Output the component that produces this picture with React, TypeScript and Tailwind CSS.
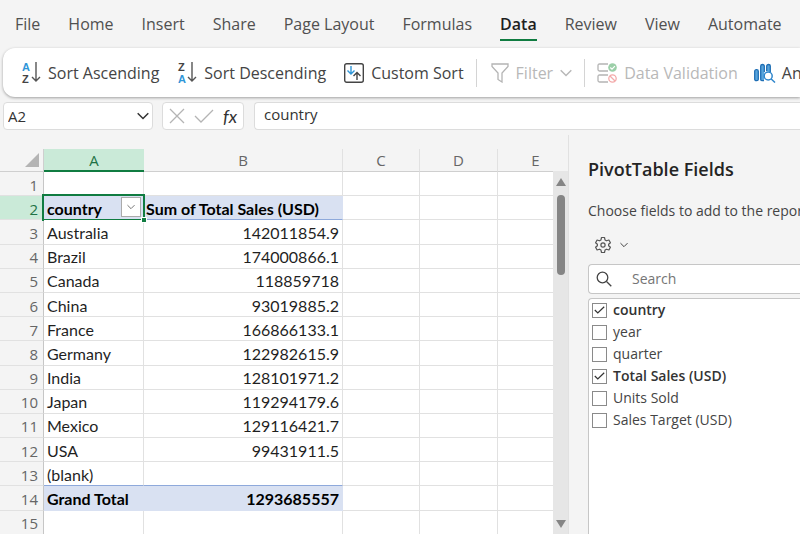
import { useState } from "react";

const tabs = ["File", "Home", "Insert", "Share", "Page Layout", "Formulas", "Data", "Review", "View", "Automate"];

const rows = [
  { a: "", b: "" },
  { a: "country", b: "Sum of Total Sales (USD)" },
  { a: "Australia", b: "142011854.9" },
  { a: "Brazil", b: "174000866.1" },
  { a: "Canada", b: "118859718" },
  { a: "China", b: "93019885.2" },
  { a: "France", b: "166866133.1" },
  { a: "Germany", b: "122982615.9" },
  { a: "India", b: "128101971.2" },
  { a: "Japan", b: "119294179.6" },
  { a: "Mexico", b: "129116421.7" },
  { a: "USA", b: "99431911.5" },
  { a: "(blank)", b: "" },
  { a: "Grand Total", b: "1293685557" },
  { a: "", b: "" },
];

const fieldNames = ["country", "year", "quarter", "Total Sales (USD)", "Units Sold", "Sales Target (USD)"];

function Chevron({ className }: { className: string }) {
  return (
    <svg viewBox="0 0 12 8" className={className} fill="none" stroke="currentColor" strokeWidth="1.5">
      <path d="M0.7 1.2 6 6.5l5.3-5.3" />
    </svg>
  );
}

function SortIcon({ top, bottom }: { top: string; bottom: string }) {
  return (
    <svg viewBox="0 0 20 24" className="h-6 w-5 shrink-0" fontFamily="Liberation Sans" fontSize="11" fontWeight="700">
      <text x="1" y="10" fill={top === "A" ? "#2f96d8" : "#444444"}>{top}</text>
      <text x="1" y="22" fill={bottom === "A" ? "#2f96d8" : "#444444"}>{bottom}</text>
      <path d="M15 1v19M11 16l4 4 4-4" fill="none" stroke="#555555" strokeWidth="1.4" />
    </svg>
  );
}

function CustomSortIcon() {
  return (
    <svg viewBox="0 0 20 20" className="size-5 shrink-0" fill="none" strokeWidth="1.4">
      <rect x="0.7" y="0.7" width="18.6" height="18.6" rx="2" stroke="#444444" />
      <path d="M7 3v8M3.5 7.5 7 11l3.500-3.500" stroke="#2f96d8" />
      <path d="M13 17V9.5M9.5 13 13 9.5l3.5 3.5" stroke="#444444" />
    </svg>
  );
}

function FilterIcon() {
  return (
    <svg viewBox="0 0 18 20" className="h-5 w-[18px] shrink-0" fill="none" stroke="#b4b4b4" strokeWidth="1.3">
      <path d="M1 1h16v2.5l-6 6.500v9L7 16.500V10L1 3.500z" />
    </svg>
  );
}

function ValidationIcon() {
  return (
    <svg viewBox="0 0 20 20" className="size-5 shrink-0" fill="none">
      <path d="M11 1H2.500Q1 1 1 2.500v4Q1 8 2.500 8H11M11 12H2.500Q1 12 1 13.500v4Q1 19 2.500 19H11" stroke="#b4b4b4" strokeWidth="1.3" />
      <circle cx="15.500" cy="4.500" r="4.300" fill="#9bcfa8" />
      <path d="m13.300 4.500 1.700 1.700 2.900-3" stroke="#ffffff" strokeWidth="1.2" />
      <circle cx="15.500" cy="15.500" r="3.700" stroke="#f3aaaa" strokeWidth="1.3" />
      <path d="m13 13 5 5" stroke="#f3aaaa" strokeWidth="1.2" />
    </svg>
  );
}

function AnalyzeIcon() {
  return (
    <svg viewBox="0 0 22 20" className="h-5 w-[22px] shrink-0" fill="none">
      <rect x="0.700" y="6.700" width="3.600" height="11" rx="1.500" fill="#5aa5dc" stroke="#1f6fb5" strokeWidth="1.300" />
      <path d="M10.300 9V3Q10.300 1.500 8.500 1.500T6.700 3v13.500Q6.700 17.700 8.500 17.700H10" fill="#5aa5dc" stroke="#1f6fb5" strokeWidth="1.300" />
      <path d="M12.700 8V3Q12.700 1.500 14.500 1.500T16.300 3v6" fill="#5aa5dc" stroke="#1f6fb5" strokeWidth="1.300" />
      <circle cx="14.200" cy="13" r="4" fill="#ffffff" stroke="#2f86cc" strokeWidth="1.500" />
      <path d="m17.200 16 3.800 3.500" stroke="#2f86cc" strokeWidth="1.500" />
    </svg>
  );
}

function GearIcon() {
  return (
    <svg viewBox="0 0 24 24" className="size-[18px]" fill="none" stroke="#555555" strokeWidth="1.600" strokeLinejoin="round">
      <path d="M10 2h4l.7 3.200 2 1.200 3.200-1 2 3.500L19.500 11v2l2.400 2.100-2 3.500-3.200-1-2 1.200L14 22h-4l-.7-3.200-2-1.200-3.200 1-2-3.500L4.500 13v-2L2.100 8.900l2-3.500 3.200 1 2-1.200z" />
      <circle cx="12" cy="12" r="2.800" />
    </svg>
  );
}

function Ribbon() {
  return (
    <div className="ml-[3px] flex h-[49px] items-center overflow-hidden whitespace-nowrap rounded-l-xl bg-white pl-[18px] text-base text-[#444444] shadow-[0_1px_3px_rgba(0,0,0,0.35)]">
      <button className="flex shrink-0 items-center gap-[7px]"><SortIcon top="A" bottom="Z" />Sort Ascending</button>
      <button className="ml-[18px] flex shrink-0 items-center gap-[7px]"><SortIcon top="Z" bottom="A" />Sort Descending</button>
      <button className="ml-[18px] flex shrink-0 items-center gap-[7px]"><CustomSortIcon />Custom Sort</button>
      <div className="mx-3 h-7 w-px shrink-0 bg-[#d4d4d4]" />
      <button disabled className="ml-[2px] flex shrink-0 items-center gap-[7px] text-[#b8b8b8]">
        <FilterIcon />Filter<Chevron className="h-2 w-3" />
      </button>
      <div className="mx-3 h-7 w-px shrink-0 bg-[#d4d4d4]" />
      <button disabled className="flex shrink-0 items-center gap-[7px] text-[#b8b8b8]"><ValidationIcon />Data Validation</button>
      <button className="ml-4 flex shrink-0 items-center gap-[6px]"><AnalyzeIcon />Analyze Data</button>
    </div>
  );
}

function FormulaBar() {
  return (
    <div className="mt-[5px] flex h-7 pl-[3px] text-[15px] text-[#333333]">
      <div className="flex w-[150px] shrink-0 items-center rounded border border-[#dcdcdc] bg-white pl-1 pr-[3px]">
        <input aria-label="Name box" defaultValue="A2" className="min-w-0 flex-1 outline-none" />
        <button aria-label="Open name box list"><Chevron className="h-2 w-3" /></button>
      </div>
      <div className="ml-[9px] flex w-[82px] shrink-0 items-center justify-between rounded border border-[#dcdcdc] bg-white px-[6px]">
        <button aria-label="Cancel">
          <svg viewBox="0 0 16 16" className="size-4" stroke="#b4b4b4" strokeWidth="1.300"><path d="m1 1 14 14M15 1 1 15" /></svg>
        </button>
        <button aria-label="Enter">
          <svg viewBox="0 0 20 14" className="h-[14px] w-5" fill="none" stroke="#b4b4b4" strokeWidth="1.300"><path d="m1 7 6 6L19 1" /></svg>
        </button>
        <button aria-label="Insert function" className="font-['Lato'] text-lg leading-5 italic">fx</button>
      </div>
      <input aria-label="Formula bar" defaultValue="country" className="ml-[10px] min-w-0 flex-1 rounded-l border border-r-0 border-[#dcdcdc] bg-white px-[9px] pb-[3px] outline-none" />
    </div>
  );
}

function Sheet() {
  return (
    <table className="h-[386px] w-[553px] shrink-0 table-fixed border-separate border-spacing-0 text-base leading-5 text-[#1f1f1f]">
      <colgroup>
        <col className="w-[44px]" />
        <col className="w-[100px]" />
        <col className="w-[199px]" />
        <col className="w-[77px]" />
        <col className="w-[78px]" />
        <col />
      </colgroup>
      <thead className="font-['Open_Sans'] text-[15px] text-[#666666]">
        <tr className="h-[23px]">
          <th aria-label="Select all" className="border-b border-r border-[#cfcfcf] p-0">
            <svg viewBox="0 0 14 14" className="ml-auto mr-1 size-[14px]"><path d="M14 0v14H0z" fill="#b4b4b4" /></svg>
          </th>
          <th className="border-b-2 border-[#107c41] bg-[#caead8] p-0 font-normal text-[#1f7246]">A</th>
          {["B", "C", "D"].map((c) => (
            <th key={c} className="border-b border-r border-b-[#cfcfcf] border-r-[#e1e1e1] p-0 font-normal">{c}</th>
          ))}
          <th className="border-b border-[#cfcfcf] p-0 pl-5 font-normal">E</th>
        </tr>
      </thead>
      <tbody className="font-['Lato']">
        {rows.map((row, i) => {
          const head = i === 1;
          const total = i === 13;
          const fill = head || total ? "bg-[#d9e1f2] font-bold text-black" : "bg-white";
          // blue rules sit under the pivot header and above the grand total
          const line = head || i === 12 ? "border-b-[#8ea9db]" : total ? "border-b-[#d9e1f2]" : "border-b-[#e1e1e1]";
          const side = head || total ? "border-r-[#d9e1f2]" : "border-r-[#e1e1e1]";
          return (
            <tr key={i}>
              <th className={`border-b border-r border-b-[#e1e1e1] border-r-[#c6c6c6] p-0 pt-[2px] pr-[5px] text-right font-['Open_Sans'] text-[15px] font-normal ${head ? "bg-[#caead8] text-[#1f7246]" : "text-[#666666]"}`}>
                {i + 1}
              </th>
              <td className={`relative border-b border-r p-0 pt-[2px] pl-[3px] ${fill} ${line} ${side}`}>
                {row.a}
                {head && (
                  <>
                    <div className="absolute -inset-x-[2px] -inset-y-[2px] border-2 border-[#107c41]" />
                    <div className="absolute -right-[4px] -bottom-[4px] z-10 size-[6px] border border-white bg-[#107c41]" />
                    <button aria-label="Filter country" className="absolute right-[2px] top-px flex size-5 items-center justify-center border border-[#ababab] bg-white text-[#777777]">
                      <Chevron className="h-[6px] w-2" />
                    </button>
                  </>
                )}
              </td>
              <td className={`border-b border-r p-0 pt-[2px] pl-[2px] pr-[3px] whitespace-nowrap ${head ? "text-left" : "text-right"} ${fill} ${line} ${side}`}>{row.b}</td>
              <td className="border-b border-r border-[#e1e1e1] bg-white p-0" />
              <td className="border-b border-r border-[#e1e1e1] bg-white p-0" />
              <td className="border-b border-[#e1e1e1] bg-white p-0" />
            </tr>
          );
        })}
      </tbody>
    </table>
  );
}

function ScrollBar() {
  return (
    <div className="mt-9 flex w-[15px] shrink-0 flex-col items-center bg-[#e6e6e6] pt-[7px] pb-[6px]">
      <svg viewBox="0 0 10 8" className="h-2 w-[10px] shrink-0"><path d="M5 0l5 8H0z" fill="#858585" /></svg>
      <div className="mt-[9px] h-20 w-2 shrink-0 rounded-full bg-[#858585]" />
      <svg viewBox="0 0 10 8" className="mt-auto h-2 w-[10px] shrink-0"><path d="M0 0h10L5 8z" fill="#858585" /></svg>
    </div>
  );
}

function FieldsPane() {
  const [checked, setChecked] = useState(["country", "Total Sales (USD)"]);

  function toggle(name: string) {
    setChecked(checked.includes(name) ? checked.filter((n) => n !== name) : [...checked, name]);
  }

  return (
    <aside className="flex min-w-0 flex-1 flex-col overflow-hidden border-l border-[#e1e1e1] pl-[19px] pt-[22px] whitespace-nowrap text-[#444444]">
      <h2 className="text-lg leading-6 font-semibold text-[#242424]">PivotTable Fields</h2>
      <p className="mt-5 text-sm leading-5">Choose fields to add to the report</p>
      <button aria-label="Tools" className="mt-[15px] flex items-center gap-2 pl-[6px]">
        <GearIcon />
        <Chevron className="h-[6px] w-2" />
      </button>
      <div className="mt-[10px] flex h-[30px] shrink-0 items-center rounded-l-sm border border-r-0 border-[#c6c6c6] bg-white pl-[7px]">
        <svg viewBox="0 0 16 16" className="size-4 shrink-0" fill="none" stroke="#444444" strokeWidth="1.300">
          <circle cx="6.500" cy="6.500" r="5.300" />
          <path d="m10.500 10.500 4.800 4.800" />
        </svg>
        <input aria-label="Search" placeholder="Search" className="ml-5 min-w-0 flex-1 text-sm outline-none placeholder:text-[#757575]" />
      </div>
      <div className="mt-1 flex-1 rounded-tl-sm border border-r-0 border-b-0 border-[#c6c6c6] bg-white pl-[3px] text-sm">
        {fieldNames.map((name) => (
          <label key={name} className={`flex h-[22px] items-center gap-[6px] ${checked.includes(name) ? "font-semibold text-[#333333]" : ""}`}>
            <span className="grid size-[15px] place-items-center">
              <input type="checkbox" checked={checked.includes(name)} onChange={() => toggle(name)} className="peer col-start-1 row-start-1 size-[15px] appearance-none border border-[#8a8a8a] bg-white" />
              <svg viewBox="0 0 11 8" className="pointer-events-none invisible col-start-1 row-start-1 h-2 w-[11px] peer-checked:visible" fill="none" stroke="#333333" strokeWidth="1.200">
                <path d="m.8 4 3 3L10.200.8" />
              </svg>
            </span>
            {name}
          </label>
        ))}
      </div>
    </aside>
  );
}

export default function App() {
  const [active, setActive] = useState("Data");

  return (
    <div className="flex h-screen flex-col overflow-hidden bg-[#f4f4f4] font-['Open_Sans',sans-serif]">
      <nav className="flex h-12 shrink-0 items-center gap-7 overflow-hidden whitespace-nowrap px-[15px] pt-px text-base text-[#505050]">
        {tabs.map((tab) => (
          <button
            key={tab}
            onClick={() => setActive(tab)}
            className={`h-8 shrink-0 border-b-2 ${tab === active ? "border-[#107c41] font-semibold text-[#1f1f1f]" : "border-transparent"}`}
          >
            {tab}
          </button>
        ))}
      </nav>
      <Ribbon />
      <FormulaBar />
      <main className="mt-[5px] flex min-h-0 flex-1">
        <div className="shrink-0 pt-[14px]">
          <Sheet />
        </div>
        <ScrollBar />
        <FieldsPane />
      </main>
    </div>
  );
}
